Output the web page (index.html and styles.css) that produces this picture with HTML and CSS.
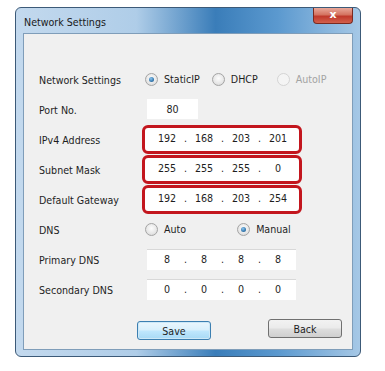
FILE: index.html
```html
<!DOCTYPE html>
<html lang="en">
<head>
  <meta charset="UTF-8">
  <title>Network Settings</title>
  <link rel="stylesheet" href="styles.css">
</head>
<body>
  <div class="window">
    <div class="titlebar">
      <span class="title">Network Settings</span>
      <div class="close-btn">x</div>
    </div>

    <div class="client">
      <div class="form">
        <div class="label">Network Settings</div>
        <div class="ctrl">
          <span class="radio checked"></span><span class="rtext t-static">StaticIP</span>
          <span class="radio"></span><span class="rtext t-dhcp">DHCP</span>
          <span class="radio disabled"></span><span class="rtext disabled">AutoIP</span>
        </div>

        <div class="label">Port No.</div>
        <div class="ctrl">
          <div class="field port">80</div>
        </div>

        <div class="label">IPv4 Address</div>
        <div class="ctrl">
          <div class="ipbox marked">
            <span class="oct">192</span><span class="dot">.</span><span class="oct">168</span><span class="dot">.</span><span class="oct">203</span><span class="dot">.</span><span class="oct">201</span>
          </div>
        </div>

        <div class="label">Subnet Mask</div>
        <div class="ctrl">
          <div class="ipbox marked">
            <span class="oct">255</span><span class="dot">.</span><span class="oct">255</span><span class="dot">.</span><span class="oct">255</span><span class="dot">.</span><span class="oct">0</span>
          </div>
        </div>

        <div class="label">Default Gateway</div>
        <div class="ctrl">
          <div class="ipbox marked">
            <span class="oct">192</span><span class="dot">.</span><span class="oct">168</span><span class="dot">.</span><span class="oct">203</span><span class="dot">.</span><span class="oct">254</span>
          </div>
        </div>

        <div class="label">DNS</div>
        <div class="ctrl">
          <span class="radio"></span><span class="rtext t-auto">Auto</span>
          <span class="radio checked"></span><span class="rtext">Manual</span>
        </div>

        <div class="label">Primary DNS</div>
        <div class="ctrl">
          <div class="ipbox plain">
            <span class="oct">8</span><span class="dot">.</span><span class="oct">8</span><span class="dot">.</span><span class="oct">8</span><span class="dot">.</span><span class="oct">8</span>
          </div>
        </div>

        <div class="label">Secondary DNS</div>
        <div class="ctrl">
          <div class="ipbox plain">
            <span class="oct">0</span><span class="dot">.</span><span class="oct">0</span><span class="dot">.</span><span class="oct">0</span><span class="dot">.</span><span class="oct">0</span>
          </div>
        </div>
      </div>

      <div class="actions">
        <button class="btn default">Save</button>
        <button class="btn back">Back</button>
      </div>
    </div>
  </div>
</body>
</html>
```

FILE: styles.css
```css
body {
  margin: 0;
  padding: 7px 0 0 15px;
  background: #ffffff;
  font-family: "DejaVu Sans Condensed", "DejaVu Sans", sans-serif;
  font-size: 10.6px;
  color: #1e1e1e;
}

.window {
  width: 346px;
  height: 350px;
  box-sizing: border-box;
  border: 1px solid #3c5a78;
  border-radius: 6px;
  padding: 0 7px 6px 7px;
  background: linear-gradient(to right, #c3d9ee 0%, #afcde8 35%, #3a7db9 58%, #5b99cf 76%, #a6c8e6 100%);
  display: flex;
  flex-direction: column;
}

.titlebar {
  height: 25px;
  display: flex;
  align-items: center;
  position: relative;
}

.title {
  margin-left: 1px;
  margin-top: 2px;
  color: #1a1a1a;
  font-size: 10.6px;
}

.close-btn {
  position: absolute;
  top: 0;
  right: 0;
  width: 40px;
  height: 16px;
  box-sizing: border-box;
  border: 1px solid #7a2a20;
  border-top: none;
  border-radius: 0 0 4px 4px;
  background: linear-gradient(to bottom, #e9a89a 0%, #d47360 45%, #c0392b 55%, #d2604c 100%);
  color: #ffffff;
  font-family: "DejaVu Sans", sans-serif;
  font-weight: bold;
  font-size: 11px;
  line-height: 13px;
  text-align: center;
}

.client {
  flex: 1;
  border: 1px solid #7f9db9;
  background: #f0f0f0;
  display: flex;
  flex-direction: column;
}

.form {
  display: grid;
  grid-template-columns: 103px 1fr;
  grid-auto-rows: 30px;
  padding: 30px 0 0 15px;
}

.label {
  display: flex;
  align-items: center;
  padding-top: 1px;
}

.ctrl {
  display: flex;
  align-items: center;
}

.radio {
  width: 13px;
  height: 13px;
  box-sizing: border-box;
  border-radius: 50%;
  border: 1px solid #a4a4a4;
  background: radial-gradient(circle at 50% 40%, #fdfdfd 0%, #e6e6e6 60%, #cfcfcf 100%);
  margin-left: 3px;
  position: relative;
}

.radio.checked::after {
  content: "";
  position: absolute;
  left: 3px;
  top: 3px;
  width: 5px;
  height: 5px;
  border-radius: 50%;
  background: radial-gradient(circle at 40% 35%, #8fc6ef 0%, #3a7fb5 55%, #1f4f7a 100%);
}

.radio.disabled {
  border-color: #d4d4d4;
  background: #f4f4f4;
}

.rtext {
  margin-left: 6px;
}

.rtext.disabled {
  color: #a3a3a3;
}

.t-static {
  margin-right: 9px;
}

.t-dhcp {
  margin-right: 16px;
}

.t-auto {
  margin-right: 48px;
}

.field {
  background: #ffffff;
  box-sizing: border-box;
}

.field.port {
  width: 51px;
  height: 20px;
  margin-left: 5px;
  text-align: center;
  line-height: 20px;
}

.ipbox {
  display: flex;
  align-items: center;
  background: #ffffff;
  box-sizing: border-box;
}

.ipbox.marked {
  width: 160px;
  height: 29px;
  border: 3px solid #c3161e;
  border-radius: 6px;
  padding: 0 0 3px 9px;
}

.ipbox.plain {
  width: 149px;
  height: 21px;
  margin-left: 5px;
  border-top: 1px solid #d8d8d8;
  padding: 0 0 2px 7px;
}

.oct {
  width: 26px;
  text-align: center;
}

.dot {
  width: 11px;
  text-align: center;
}

.actions {
  display: flex;
  align-items: flex-start;
  margin-top: 15px;
}

.btn {
  font-family: "DejaVu Sans Condensed", "DejaVu Sans", sans-serif;
  font-size: 10.6px;
  color: #1e1e1e;
  width: 74px;
  height: 19px;
  padding: 0;
  border-radius: 3px;
}

.btn.default {
  margin-left: 113px;
  margin-top: 2px;
  border: 1px solid #3c7fb1;
  background: linear-gradient(to bottom, #eaf6fd 0%, #d9f0fc 45%, #bee6fd 55%, #a7d9f5 100%);
  box-shadow: inset 0 0 0 1px #cde8f7;
}

.btn.back {
  margin-left: 57px;
  border: 1px solid #707070;
  background: linear-gradient(to bottom, #f2f2f2 0%, #ebebeb 45%, #dddddd 55%, #cfcfcf 100%);
}
```
